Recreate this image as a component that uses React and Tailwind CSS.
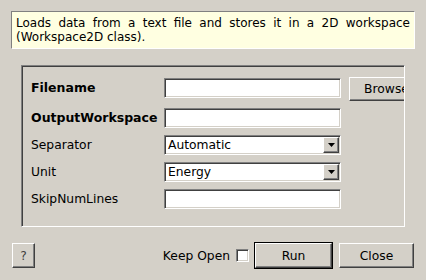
const sunken =
  "border border-t-[#808080] border-l-[#808080] border-r-[#ffffff] border-b-[#ffffff] shadow-[inset_1px_1px_0_#404040,inset_-1px_-1px_0_#d4d0c8]";
const raised =
  "border border-t-[#ffffff] border-l-[#ffffff] border-r-[#404040] border-b-[#404040] shadow-[inset_-1px_-1px_0_#808080] bg-[#d4d0c8]";

function Input() {
  return <div className={`w-[177px] h-[20px] bg-white shrink-0 ${sunken}`} />;
}

function Combo({ value }) {
  return (
    <div className={`w-[177px] h-[20px] bg-white shrink-0 flex items-stretch p-[1px] ${sunken}`}>
      <div className="flex-1 pl-[2px] flex items-center leading-none">{value}</div>
      <div className={`w-[16px] flex items-center justify-center ${raised}`}>
        <svg width="7" height="4" viewBox="0 0 7 4">
          <path d="M0 0H7L3.5 4Z" fill="#000" />
        </svg>
      </div>
    </div>
  );
}

function Label({ children, bold }) {
  return (
    <div className={`w-[133px] shrink-0 ${bold ? "font-bold text-[12.5px]" : ""}`}>{children}</div>
  );
}

export default function App() {
  return (
    <div className="w-[426px] h-[280px] bg-[#d4d0c8] overflow-hidden flex flex-col font-['DejaVu_Sans',sans-serif] text-[12.3px] leading-[14px] text-black">
      <div className="mt-[11px] ml-[11px] w-[404px] h-[38px] bg-[#ffffe1] border border-t-[#808080] border-l-[#808080] border-r-[#ffffff] border-b-[#ffffff] px-[4px] pt-[4px] text-justify text-[12px]">
        Loads data from a text file and stores it in a 2D workspace (Workspace2D class).
      </div>

      <div className={`mt-[16px] ml-[21px] w-[384px] h-[162px] overflow-hidden pt-[11px] pl-[9px] ${sunken}`}>
        <div className="flex flex-col gap-[7px]">
          <div className="flex items-start h-[24px]">
            <div className="w-[133px] shrink-0 font-bold text-[12.5px] mt-[4px]">Filename</div>
            <div className="mt-[1px]">
              <Input />
            </div>
            <div className={`ml-[8px] w-[75px] h-[24px] shrink-0 flex items-center justify-center ${raised}`}>
              Browse
            </div>
          </div>
          <div className="flex items-center h-[20px]">
            <Label bold>OutputWorkspace</Label>
            <Input />
          </div>
          <div className="flex items-center h-[20px]">
            <Label>Separator</Label>
            <Combo value="Automatic" />
          </div>
          <div className="flex items-center h-[20px]">
            <Label>Unit</Label>
            <Combo value="Energy" />
          </div>
          <div className="flex items-center h-[20px]">
            <Label>SkipNumLines</Label>
            <Input />
          </div>
        </div>
      </div>

      <div className="mt-[15px] h-[27px] flex items-center pl-[12px] pr-[12px]">
        <div className={`w-[23px] h-[25px] flex items-center justify-center text-[#404040] ${raised}`}>?</div>
        <div className="flex-1" />
        <div>Keep Open</div>
        <div className={`ml-[6px] w-[13px] h-[13px] bg-white ${sunken}`} />
        <div className="ml-[5px] w-[79px] h-[27px] border border-black">
          <div className={`w-full h-full flex items-center justify-center ${raised}`}>Run</div>
        </div>
        <div className={`ml-[6px] w-[75px] h-[25px] flex items-center justify-center ${raised}`}>Close</div>
      </div>
    </div>
  );
}
